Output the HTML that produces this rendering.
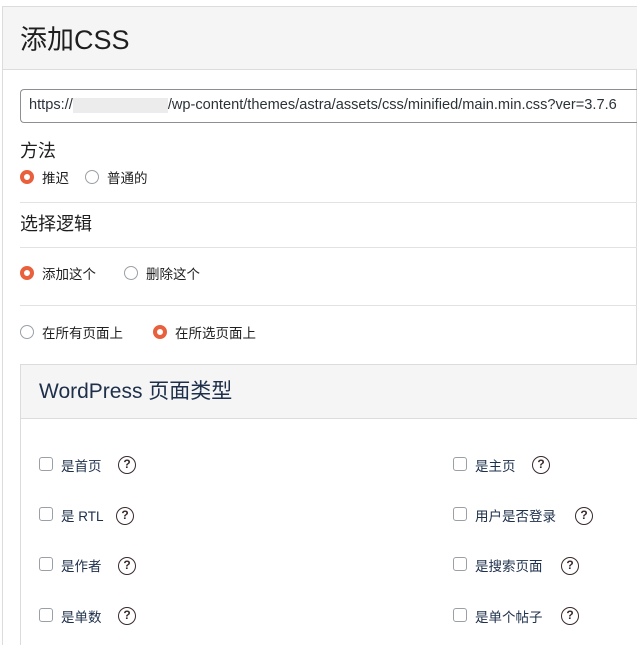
<!DOCTYPE html>
<html style="overflow:hidden;height:645px"><head><meta charset="utf-8"><style>
*{box-sizing:border-box;margin:0;padding:0}
body{width:637px;height:645px;background:#fff;position:relative;overflow:hidden;font-family:"Liberation Sans","Noto Sans CJK SC",sans-serif;color:#1e1e1e}
.a{position:absolute;white-space:nowrap}
.r{position:absolute;width:14px;height:14px;border-radius:50%;border:1px solid #9aa0a6;background:#fff}
.r.on{border:4px solid #e8603c;background:#fff}
.c{position:absolute;width:14px;height:14px;border-radius:3px;border:1px solid #9aa0a6;background:#fff}
.q{position:absolute;width:18px;height:18px;border-radius:50%;border:1.6px solid #3a2a2a;font:bold 12px/15px "Liberation Sans",sans-serif;text-align:center;color:#3a2a2a}
.t{font-size:13.5px;color:#1d2f4a}
.hr{position:absolute;left:20px;right:0;height:1px;background:#e2e2e2}
</style></head><body>
<div class="a" style="left:2px;top:6px;width:635px;height:639px;border:1px solid #dcdcdc;border-bottom:none;background:#fff"></div>
<div class="a" style="left:3px;top:7px;width:634px;height:63px;background:#f5f5f5;border-bottom:1px solid #dcdcdc"></div>
<div class="a" style="left:20px;top:18px;font-size:27px;color:#1e1e1e">添加CSS</div>
<div class="a" style="left:20px;top:89px;width:617px;height:34px;border:1px solid #8c8f94;border-right:none;border-radius:4px 0 0 4px"></div>
<div class="a" style="left:29px;top:97px;font-size:14.6px;color:#2c3338">https://<span style="display:inline-block;width:95px;height:15px;background:#ececec;vertical-align:middle"></span>/wp-content/themes/astra/assets/css/minified/main.min.css?ver=3.7.6</div>
<div class="a" style="left:20px;top:137px;font-size:18px">方法</div>
<div class="r on" style="left:20px;top:170px"></div><div class="a t" style="left:42px;top:167px;color:#1e1e1e">推迟</div>
<div class="r" style="left:85px;top:170px"></div><div class="a t" style="left:107px;top:167px;color:#1e1e1e">普通的</div>
<div class="hr" style="top:202px"></div>
<div class="a" style="left:20px;top:210px;font-size:18px">选择逻辑</div>
<div class="hr" style="top:247px"></div>
<div class="r on" style="left:20px;top:266px"></div><div class="a t" style="left:42px;top:263px;color:#1e1e1e">添加这个</div>
<div class="r" style="left:124px;top:266px"></div><div class="a t" style="left:146px;top:263px;color:#1e1e1e">删除这个</div>
<div class="hr" style="top:305px"></div>
<div class="r" style="left:20px;top:325px"></div><div class="a t" style="left:42px;top:322px;color:#1e1e1e">在所有页面上</div>
<div class="r on" style="left:153px;top:325px"></div><div class="a t" style="left:175px;top:322px;color:#1e1e1e">在所选页面上</div>
<div class="a" style="left:20px;top:364px;width:617px;height:281px;border:1px solid #dcdcdc;border-right:none;border-bottom:none;background:#fff"></div>
<div class="a" style="left:21px;top:365px;width:616px;height:54px;background:#f5f5f5;border-bottom:1px solid #dcdcdc"></div>
<div class="a" style="left:39px;top:375px;font-size:21px;color:#1d2f4a">WordPress 页面类型</div>

<div class="c" style="left:39px;top:457px"></div><div class="a t" style="left:61px;top:455px">是首页</div><div class="q" style="left:118px;top:456px">?</div>
<div class="c" style="left:39px;top:507px"></div><div class="a t" style="left:61px;top:505px">是 RTL</div><div class="q" style="left:116px;top:507px">?</div>
<div class="c" style="left:39px;top:557px"></div><div class="a t" style="left:61px;top:555px">是作者</div><div class="q" style="left:118px;top:557px">?</div>
<div class="c" style="left:39px;top:608px"></div><div class="a t" style="left:61px;top:606px">是单数</div><div class="q" style="left:118px;top:607px">?</div>

<div class="c" style="left:453px;top:457px"></div><div class="a t" style="left:475px;top:455px">是主页</div><div class="q" style="left:532px;top:456px">?</div>
<div class="c" style="left:453px;top:507px"></div><div class="a t" style="left:475px;top:505px">用户是否登录</div><div class="q" style="left:575px;top:507px">?</div>
<div class="c" style="left:453px;top:557px"></div><div class="a t" style="left:475px;top:555px">是搜索页面</div><div class="q" style="left:561px;top:557px">?</div>
<div class="c" style="left:453px;top:608px"></div><div class="a t" style="left:475px;top:606px">是单个帖子</div><div class="q" style="left:561px;top:607px">?</div>
</body></html>
